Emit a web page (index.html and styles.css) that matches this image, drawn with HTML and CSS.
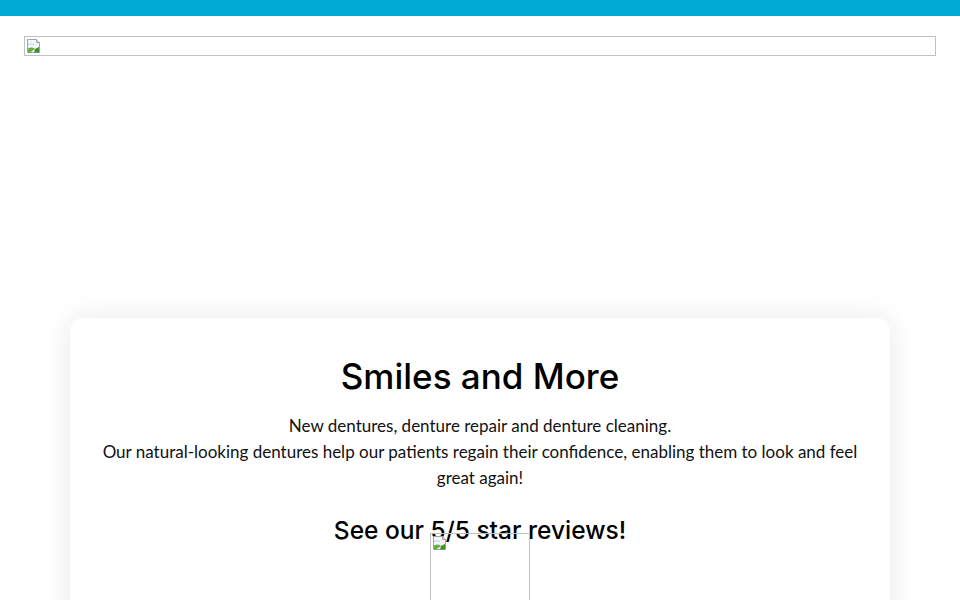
FILE: index.html
```html
<!DOCTYPE html>
<html lang="en">
<head>
<meta charset="utf-8">
<title>Smiles and More</title>
<link rel="stylesheet" href="styles.css">
</head>
<body>
<div class="topbar"></div>
<header class="logo-wrap">
  <div class="broken-img logo" role="img" aria-label="Smiles and More logo">
    <svg class="broken-icon" width="16" height="16" viewBox="0 0 16 16" aria-hidden="true">
      <path d="M1.5 1.5h9l3 3v10h-12z" fill="#f4f6fa" stroke="#9aa3b0"/>
      <path d="M10.5 1.5v3h3" fill="#dfe4ec" stroke="#9aa3b0"/>
      <path d="M2 10.5c3-1.5 5-1 7 .5l-5 3.5H2z" fill="#6cae3e"/>
      <path d="M9 11l4-2v5.5H8z" fill="#3f8f2a"/>
      <path d="M2 6.5c2-1 4-.5 6 .2" fill="none" stroke="#b8d0ea"/>
    </svg>
  </div>
</header>
<main class="card">
  <h1 class="title">Smiles and More</h1>
  <p class="intro">New dentures, denture repair and denture cleaning.<br>Our natural-looking dentures help our patients regain their confidence, enabling them to look and feel great again!</p>
  <h2 class="subtitle">See our 5/5 star reviews!</h2>
  <div class="reviews">
    <div class="broken-img badge" role="img" aria-label="5 star reviews badge">
      <svg class="broken-icon" width="16" height="16" viewBox="0 0 16 16" aria-hidden="true">
        <path d="M1.5 1.5h9l3 3v10h-12z" fill="#f4f6fa" stroke="#9aa3b0"/>
        <path d="M10.5 1.5v3h3" fill="#dfe4ec" stroke="#9aa3b0"/>
        <path d="M2 10.5c3-1.5 5-1 7 .5l-5 3.5H2z" fill="#6cae3e"/>
        <path d="M9 11l4-2v5.5H8z" fill="#3f8f2a"/>
        <path d="M2 6.5c2-1 4-.5 6 .2" fill="none" stroke="#b8d0ea"/>
      </svg>
    </div>
  </div>
</main>
</body>
</html>
```
FILE: styles.css
```css
html, body {
  margin: 0;
  padding: 0;
  background: #ffffff;
}
body {
  font-family: Lato, "Liberation Sans", sans-serif;
  color: #111;
}
.topbar {
  height: 16px;
  background: #00aad2;
}
.logo-wrap {
  padding: 20px 24px 0;
  height: 282px;
}
.broken-img {
  box-sizing: border-box;
  border: 1px solid #c0c0c0;
  display: flex;
  align-items: flex-start;
  padding: 1px;
}
.logo {
  width: 100%;
  height: 20px;
}
.broken-icon {
  display: block;
  flex: none;
}
.card {
  width: 820px;
  margin: 0 auto;
  box-sizing: border-box;
  padding: 38px 30px 0;
  background: #fff;
  border-radius: 14px;
  box-shadow: 0 0 30px rgba(0, 0, 0, 0.09);
  text-align: center;
  height: 320px;
}
.title {
  margin: 0;
  font-family: Inter, "Noto Sans", sans-serif;
  font-weight: 500;
  font-size: 35px;
  line-height: 40px;
  color: #000;
}
.intro {
  margin: 17px 0 0;
  font-size: 17px;
  line-height: 26px;
}
.subtitle {
  margin: 24px 0 0;
  font-family: Inter, "Noto Sans", sans-serif;
  font-weight: 500;
  font-size: 24.5px;
  line-height: 30px;
  color: #000;
}
.reviews {
  display: flex;
  justify-content: center;
  margin-top: -12px;
}
.badge {
  width: 100px;
  height: 100px;
}
```
